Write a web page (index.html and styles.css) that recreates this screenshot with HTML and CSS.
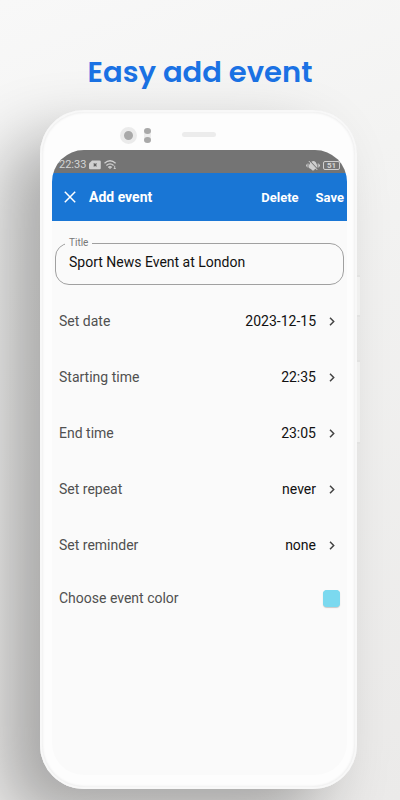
FILE: index.html
```html
<!DOCTYPE html>
<html lang="en">
<head>
<meta charset="utf-8">
<meta name="viewport" content="width=device-width, initial-scale=1">
<title>Easy add event</title>
<link rel="stylesheet" href="styles.css">
</head>
<body>
<h1 class="headline">Easy add event</h1>
<main class="phone">
  <span class="side-key side-key-power"></span>
  <span class="side-key side-key-volume"></span>
  <div class="sensors">
    <span class="camera"></span>
    <span class="dots"><i></i><i></i></span>
    <span class="speaker"></span>
  </div>
  <div class="screen">
    <div class="status">
      <span>22:33</span>
      <svg width="12" height="10" viewBox="0 0 12 10"><path fill="#cfcfcf" d="M3 0.5h7.500a1.300 1.300 0 0 1 1.300 1.300v6.200a1.300 1.300 0 0 1-1.300 1.300H1.300A1.300 1.300 0 0 1 0 8V3.500z"/><path d="M4.700 3.500l2.800 2.800m0-2.800L4.700 6.300" stroke="#606060" stroke-width="1.200"/></svg>
      <svg width="13" height="10" viewBox="0 0 13 10" fill="none" stroke="#d0d0d0" stroke-width="1.300"><path d="M.5 3.300Q6-1.700 11.600 3.300M2.400 5.500Q6 2.300 9.600 5.500M4.300 7.500Q6 5.700 7.700 7.500"/><path d="M4.500 7.300h3L6 9.300z" fill="#d0d0d0" stroke="none"/><path d="M10.700 5.700v3.300m-1-1l1 1 1-1" stroke-width=".9"/></svg>
      <svg class="status-end" width="14" height="11" viewBox="0 0 14 11"><path fill="#cfcfcf" d="M4.500 2.500Q7-.5 9.800 2.200Q11.200 4 11.200 8L8.800 9Q8.500 10.500 7 10.500Q5.800 10.500 5.300 9.200L3 8Q2.500 5 4.500 2.500z"/><path d="M4 1.200l8 8.500" stroke="#747474" stroke-width="1.100"/><path d="M2.800 1l8.500 9M.6 4.500v2M2 3.500v4M12.200 3.500v4M13.500 4.500v2" stroke="#cfcfcf" stroke-width="1"/></svg>
      <span class="battery">51</span>
    </div>
    <header class="appbar">
      <button class="icon-button" type="button" aria-label="Close"><svg width="12" height="12" viewBox="0 0 12 12"><path d="M.8.8l10.400 10.400M11.200.8L.8 11.200" stroke="#fff" stroke-width="1.500"/></svg></button>
      <h2>Add event</h2>
      <button type="button">Delete</button>
      <button type="submit" form="event">Save</button>
    </header>
    <form class="form" id="event">
      <fieldset class="field">
        <legend><label for="title">Title</label></legend>
        <input id="title" type="text" value="Sport News Event at London">
      </fieldset>
      <button class="row" type="button"><span>Set date</span><span class="value">2023-12-15</span><svg class="chevron" viewBox="0 0 6 9"><path d="M1 .8l3.700 3.700L1 8.200"/></svg></button>
      <button class="row" type="button"><span>Starting time</span><span class="value">22:35</span><svg class="chevron" viewBox="0 0 6 9"><path d="M1 .8l3.700 3.700L1 8.200"/></svg></button>
      <button class="row" type="button"><span>End time</span><span class="value">23:05</span><svg class="chevron" viewBox="0 0 6 9"><path d="M1 .8l3.700 3.700L1 8.200"/></svg></button>
      <button class="row" type="button"><span>Set repeat</span><span class="value">never</span><svg class="chevron" viewBox="0 0 6 9"><path d="M1 .8l3.700 3.700L1 8.200"/></svg></button>
      <button class="row" type="button"><span>Set reminder</span><span class="value">none</span><svg class="chevron" viewBox="0 0 6 9"><path d="M1 .8l3.700 3.700L1 8.200"/></svg></button>
      <div class="row row-color"><label for="color">Choose event color</label><input id="color" class="swatch" type="color" value="#7bd9ef"></div>
    </form>
  </div>
</main>
</body>
</html>
```
FILE: styles.css
```css
* {
  box-sizing: border-box;
}

body {
  margin: 0;
  min-height: 100vh;
  padding: 52px 0 11px;
  display: flex;
  flex-direction: column;
  overflow-x: hidden;
  font-family: Roboto, "Liberation Sans", sans-serif;
  font-size: 14px;
  background: linear-gradient(160deg, #f8f8f8 0%, #f3f3f2 30%, #ebeae9 100%);
}

button {
  padding: 0;
  border: 0;
  background: none;
  font: inherit;
  color: inherit;
}

.headline {
  margin: 0 0 18px;
  font-family: Poppins, Inter, sans-serif;
  font-size: 29px;
  line-height: 40px;
  font-weight: 600;
  text-align: center;
  white-space: nowrap;
  color: #1b72e4;
}

.phone {
  position: relative;
  flex: 1;
  display: flex;
  flex-direction: column;
  margin: 0 43px 0 40px;
  padding: 15px 10px 14px 12px;
  border-radius: 44px;
  background: #fdfdfd;
  box-shadow:
    inset 0 0 0 2px #f8f8f8,
    inset 0 0 3px 2px #e2e2e2,
    -34px 28px 64px rgba(0, 0, 0, 0.3);
}

.side-key {
  position: absolute;
  left: 100%;
  width: 3px;
  background: #f0f0ef;
  border-top: 2px solid #e2e2e1;
  border-bottom: 2px solid #e2e2e1;
}

.side-key-power {
  top: 165px;
  height: 42px;
}

.side-key-volume {
  top: 250px;
  height: 84px;
}

.sensors {
  height: 25px;
  padding-left: 68px;
  display: flex;
  align-items: flex-start;
}

.camera {
  width: 17px;
  height: 17px;
  margin-top: 2px;
  border: 4px solid #ebebeb;
  border-radius: 50%;
  background: #a9a9a9;
}

.dots {
  margin: 3px 0 0 7px;
  display: grid;
  gap: 3px;
  border-radius: 4px;
  background: #ededed;
}

.dots i {
  width: 7px;
  height: 6px;
  border-radius: 50%;
  background: #a9a9a9;
}

.speaker {
  width: 34px;
  height: 5px;
  margin: 7px 0 0 31px;
  border-radius: 3px;
  background: #ececec;
}

.screen {
  flex: 1;
  overflow: hidden;
  border-radius: 32px;
  background: #fafafa;
}

.status {
  height: 23px;
  padding: 7px 7px 0;
  display: flex;
  align-items: center;
  gap: 3px;
  background: #747474;
  color: #d4d4d4;
  font-size: 11px;
  line-height: 16px;
}

.status-end {
  margin-left: auto;
}

.battery {
  width: 17px;
  height: 9px;
  border: 1px solid #cfcfcf;
  border-radius: 2px;
  font-size: 8px;
  line-height: 7px;
  font-weight: 700;
  text-align: center;
}

.appbar {
  height: 48px;
  padding: 0 3px 0 12px;
  display: flex;
  align-items: center;
  gap: 17px;
  background: #1976d5;
  color: #fff;
  font-weight: 700;
  font-size: 13px;
}

.appbar h2 {
  flex: 1;
  margin: 0;
  font-size: 14px;
  font-weight: 700;
}

.icon-button {
  display: flex;
  margin-right: -4px;
}

.form {
  padding: 16px 3px 0;
}

.field {
  height: 48px;
  margin: 0 0 8px;
  padding: 0 13px;
  border: 1px solid #a0a0a0;
  border-radius: 14px;
  min-width: 0;
}

.field legend {
  margin-left: -4px;
  padding: 0 4px;
  font-size: 10px;
  line-height: 12px;
  color: #777;
}

.field input {
  display: block;
  width: 100%;
  height: 26px;
  padding: 0;
  border: 0;
  outline: 0;
  background: none;
  font: inherit;
  color: #111;
}

.row {
  width: 100%;
  height: 56px;
  padding: 0 9px 0 4px;
  display: flex;
  align-items: center;
  justify-content: space-between;
  color: #505050;
}

.value {
  margin: 0 13px 0 auto;
  color: #111;
}

.chevron {
  width: 6px;
  height: 9px;
  fill: none;
  stroke: #444;
  stroke-width: 1.5;
}

.row-color {
  height: 50px;
  padding-right: 4px;
}

.swatch {
  width: 17px;
  height: 17px;
  padding: 0;
  border: 0;
  border-radius: 4px;
  background: #7bd9ef;
  box-shadow: 0 1px 1px #c8c8c8;
  appearance: none;
}

.swatch::-webkit-color-swatch-wrapper {
  padding: 0;
}

.swatch::-webkit-color-swatch {
  border: 0;
  border-radius: 4px;
}
```
